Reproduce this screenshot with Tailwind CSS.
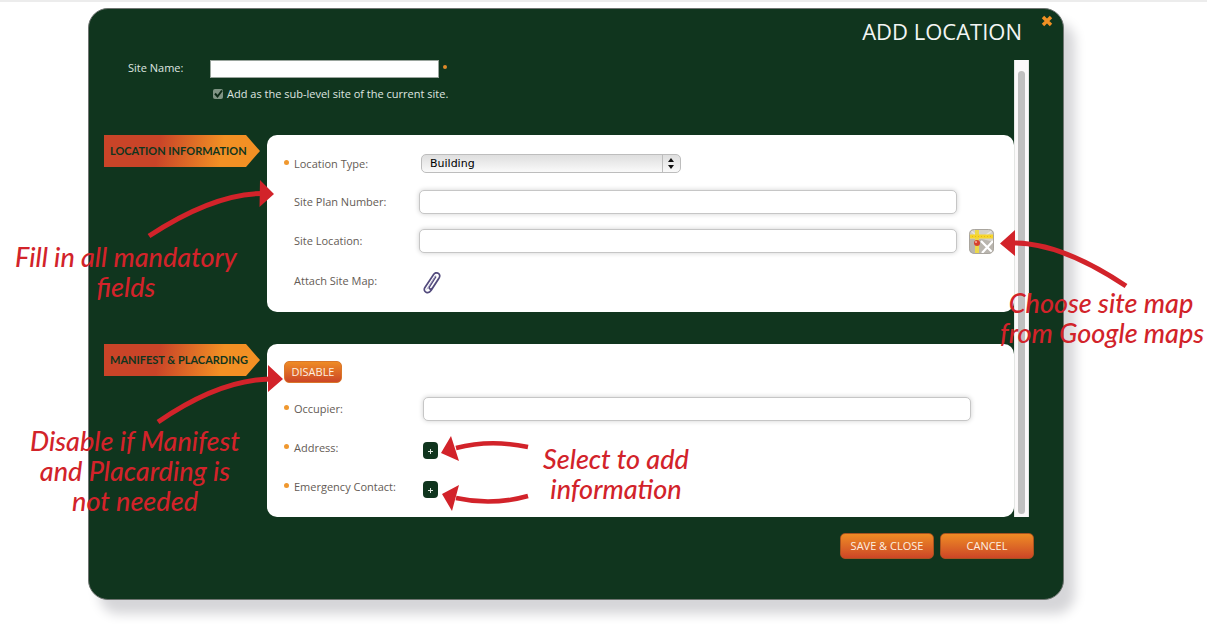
<!DOCTYPE html>
<html lang="en">

<head>
    <meta charset="UTF-8">
    <meta name="viewport" content="width=device-width, initial-scale=1.0">
    <script src="https://cdn.jsdelivr.net/npm/@tailwindcss/browser@4"></script>
    <title>Add Location</title>
</head>

<body class="bg-white font-['Open_Sans',sans-serif] text-[11px] leading-4">
    <div class="relative border-t-2 border-[#ececec] pt-1.5 pb-6 overflow-hidden">

        <main class="ml-[88px] mr-[143px] rounded-[20px] border border-[#6f7471] bg-[#10351e] shadow-[11px_14px_12px_#d6d6d9]">
            <header class="flex items-start justify-end h-[51px] pt-1.5 pr-[10px]">
                <h1 class="mr-[19px] mt-1 text-[22px] leading-6 text-[#f3f5f3]">ADD LOCATION</h1>
                <button type="button" aria-label="Close" class="w-3 h-3">
                    <svg class="w-3 h-3" viewBox="0 0 12 12" fill="none" stroke="#f29024" stroke-width="3.4">
                        <path d="M2 2l8 8M10 2l-8 8" />
                    </svg>
                </button>
            </header>

            <div class="flex ml-[15px] mr-[34px]">
                <form class="flex-1 min-w-0">
                    <div class="flex items-center h-[18px]">
                        <label for="site-name" class="w-[106px] pl-6 pb-0.5 text-[#dfe6e0] whitespace-nowrap">Site Name:</label>
                        <input id="site-name" type="text" class="w-[229px] h-[18px] px-1 bg-white border border-[#9aa59d]">
                        <span class="ml-1 mb-1 w-1 h-1 rounded-full bg-[#e08a2a]"></span>
                    </div>
                    <div class="flex items-center h-4 mt-2 pl-[109px]">
                        <span class="relative w-[10px] h-[10px] mr-1">
                            <input id="sub-level" type="checkbox" checked class="block appearance-none w-[10px] h-[10px] rounded-xs bg-[#7f9484]">
                            <svg class="absolute inset-0 pointer-events-none" viewBox="0 0 10 10" fill="none" stroke="#0d2a17" stroke-width="2">
                                <path d="M2 4.5l2.5 3L9 1.5" />
                            </svg>
                        </span>
                        <label for="sub-level" class="text-[#dfe6e0]">Add as the sub-level site of the current site.</label>
                    </div>

                    <section class="flex items-start mt-[33px]">
                        <h2 class="w-[156px] h-8 mr-[7px] pl-1.5 font-['Lato',sans-serif] text-[11px] leading-8 font-bold text-[#10351e] whitespace-nowrap bg-linear-[100deg] from-[#c94428] from-35% to-[#f29024] to-75% [clip-path:polygon(0_0,142px_0,100%_50%,142px_100%,0_100%)]">LOCATION INFORMATION</h2>
                        <div class="flex-1 min-w-0 pt-[9px] pb-3 pl-[17px] pr-5 rounded-[10px] bg-white text-[#645b55]">
                            <div class="flex items-center h-[39px]">
                                <span class="w-[5px] h-[5px] mr-[5px] mb-0.5 rounded-full bg-[#f0982f]"></span>
                                <label for="location-type" class="w-[127px]">Location Type:</label>
                                <div class="relative w-[260px]">
                                    <select id="location-type" class="block appearance-none w-full h-[19px] pl-2 rounded-[5px] border border-[#bdbdbd] bg-linear-to-b from-[#dedede] to-[#fafafa] text-black font-['DejaVu_Sans',sans-serif] text-[11px]">
                                        <option>Building</option>
                                    </select>
                                    <svg class="absolute right-0 top-0 w-[19px] h-[19px] pointer-events-none" viewBox="0 0 19 19">
                                        <path d="M.5 1v17" stroke="#bdbdbd" />
                                        <path d="M9 4l3 4H6zM9 15l3-4H6z" fill="#111" />
                                    </svg>
                                </div>
                            </div>
                            <div class="flex items-center h-[39px] pl-[10px]">
                                <label for="plan-number" class="w-[125px] pb-0.5">Site Plan Number:</label>
                                <input id="plan-number" type="text" class="flex-1 min-w-0 h-6 mr-[37px] mb-0.5 px-2 rounded-[5px] border border-[#c6c6c6] bg-white shadow-[0_0_5px_#cfcfcf]">
                            </div>
                            <div class="flex items-center h-[39px] pl-[10px]">
                                <label for="site-location" class="w-[125px] pb-0.5">Site Location:</label>
                                <input id="site-location" type="text" class="flex-1 min-w-0 h-6 mr-3 mb-0.5 px-2 rounded-[5px] border border-[#c6c6c6] bg-white shadow-[0_0_5px_#cfcfcf]">
                                <button type="button" aria-label="Choose site map" class="w-[25px] h-[25px] rounded-[5px] overflow-hidden">
                                    <svg class="w-[25px] h-[25px]" viewBox="0 0 25 25" fill="none">
                                        <path d="M0 0h25v25H0z" fill="#b9b5ae" />
                                        <path d="M0 0h25v13L13 10H0z" fill="#d3d0ca" />
                                        <path d="M1 1l6 5M24 1l-8 6" stroke="#e9e7e3" stroke-width="1.5" />
                                        <path d="M12 12l12 12M24 12L13 24" stroke="#fff" stroke-width="2.2" />
                                        <path d="M8 0v25" stroke="#ecd84a" stroke-width="4" />
                                        <path d="M0 7.5h25" stroke="#f7d52b" stroke-width="4" />
                                        <path d="M0 7.5h25" stroke="#e0b81d" stroke-dasharray="1 2" />
                                        <circle cx="8" cy="14" r="3" fill="#d6402f" />
                                        <circle cx="7" cy="13" r="1" fill="#f6b2a4" />
                                        <rect x=".5" y=".5" width="24" height="24" rx="5" stroke="#a9a59e" />
                                    </svg>
                                </button>
                            </div>
                            <div class="flex items-center h-[39px] pl-[10px]">
                                <label for="attach-map" class="w-[129px]">Attach Site Map:</label>
                                <button id="attach-map" type="button" class="w-[18px] h-[22px] mt-1">
                                    <svg class="w-[18px] h-[22px]" viewBox="0 0 18 22" fill="none" stroke="#524a7c" stroke-width="1.7" stroke-linecap="round">
                                        <path d="M15.5 7L8.2 18.3c-3 4.4-8.6 1.4-6.4-2.6L10.6 2.5c2.5-3.6 7.8-.6 5.6 3.2L9.5 16c-1.5 2.2-4.3.8-3-1.4L12.5 5" />
                                        <path d="M4 17L12.5 3.8" stroke="#aaa5c4" stroke-width="1" />
                                    </svg>
                                </button>
                            </div>
                        </div>
                    </section>

                    <section class="flex items-start mt-8">
                        <h2 class="w-[156px] h-8 mr-[7px] pl-1.5 font-['Lato',sans-serif] text-[11px] leading-8 font-bold text-[#10351e] whitespace-nowrap bg-linear-[100deg] from-[#c94428] from-35% to-[#f29024] to-75% [clip-path:polygon(0_0,142px_0,100%_50%,142px_100%,0_100%)]">MANIFEST &amp; PLACARDING</h2>
                        <div class="flex-1 min-w-0 pt-[17px] pb-[11px] pl-[17px] pr-[43px] rounded-[10px] bg-white text-[#645b55]">
                            <button type="button" class="block w-[58px] h-[22px] mb-1.5 rounded-[5px] border border-[#d9772a] bg-linear-to-b from-[#ee8b24] to-[#cc4526] text-[#fdf0e0]">DISABLE</button>
                            <div class="flex items-center h-[39px]">
                                <span class="w-[5px] h-[5px] mr-[5px] mb-0.5 rounded-full bg-[#f0982f]"></span>
                                <label for="occupier" class="w-[129px]">Occupier:</label>
                                <input id="occupier" type="text" class="flex-1 min-w-0 h-6 px-2 rounded-[5px] border border-[#c6c6c6] bg-white shadow-[0_0_5px_#cfcfcf]">
                            </div>
                            <div class="flex items-center h-[39px]">
                                <span class="w-[5px] h-[5px] mr-[5px] mb-0.5 rounded-full bg-[#f0982f]"></span>
                                <label for="add-address" class="w-[129px]">Address:</label>
                                <button id="add-address" type="button" class="w-[15px] h-[17px] mt-1.5 rounded-[4px] bg-[#10351e]">
                                    <svg class="w-[15px] h-[17px]" viewBox="0 0 15 17" stroke="#dfe8e0"><path d="M5 9.5h5M7.5 7v5" /></svg>
                                </button>
                            </div>
                            <div class="flex items-center h-[39px]">
                                <span class="w-[5px] h-[5px] mr-[5px] mb-0.5 rounded-full bg-[#f0982f]"></span>
                                <label for="add-contact" class="w-[129px]">Emergency Contact:</label>
                                <button id="add-contact" type="button" class="w-[15px] h-[17px] mt-1.5 rounded-[4px] bg-[#10351e]">
                                    <svg class="w-[15px] h-[17px]" viewBox="0 0 15 17" stroke="#dfe8e0"><path d="M5 9.5h5M7.5 7v5" /></svg>
                                </button>
                            </div>
                        </div>
                    </section>
                </form>

                <!-- scrollbar -->
                <div class="flex w-[15px] bg-[#fbf9fa] border-x border-[#e4e6e4] px-[3px] pt-[11px] pb-[3px]">
                    <div class="flex-1 rounded-full bg-[#c0c0c0]"></div>
                </div>
            </div>

            <footer class="flex justify-end gap-1.5 pt-4 pb-10 pr-[29px]">
                <button type="button" class="w-[94px] h-[26px] rounded-[5px] border border-[#a8521f] bg-linear-to-b from-[#ee8b24] to-[#cc4526] text-[#fdf0e0]">SAVE &amp; CLOSE</button>
                <button type="button" class="w-[94px] h-[26px] rounded-[5px] border border-[#a8521f] bg-linear-to-b from-[#ee8b24] to-[#cc4526] text-[#fdf0e0]">CANCEL</button>
            </footer>
        </main>

        <!-- callouts -->
        <div class="absolute left-0 -top-0.5 w-[1207px] h-[624px] pointer-events-none text-center whitespace-nowrap text-[#d2232a] font-['Lato',sans-serif] italic font-medium text-[27px] leading-[30px]">
            <svg class="absolute inset-0" viewBox="0 0 1207 624" fill="none" stroke="#d2232a" stroke-width="5">
                <path d="M149 236Q213 194 262 193.5" />
                <path d="M1126 286Q1060 242 1012 243" />
                <path d="M158 422Q219 380 270 379" />
                <path d="M528 447Q490 439 456 448" stroke-width="4.5" />
                <path d="M528 496Q492 506 456 498" stroke-width="4.5" />
                <path d="M260 180l14 14-14.5 13zM1015 230l-15 13.5 15 12.5zM268 365l15 14-15 13zM451 436l-10 17 18 8zM459 485l-17 9 10 17z" fill="#d2232a" stroke="none" />
            </svg>
            <p class="absolute left-[6px] top-[242px] w-[240px]">Fill in all mandatory<br>fields</p>
            <p class="absolute left-[1000px] top-[288px] w-[202px]">Choose site map<br>from Google maps</p>
            <p class="absolute left-[10px] top-[426px] w-[250px]">Disable if Manifest<br>and Placarding is<br>not needed</p>
            <p class="absolute left-[516px] top-[444px] w-[200px]">Select to add<br>information</p>
        </div>
    </div>
</body>

</html>
